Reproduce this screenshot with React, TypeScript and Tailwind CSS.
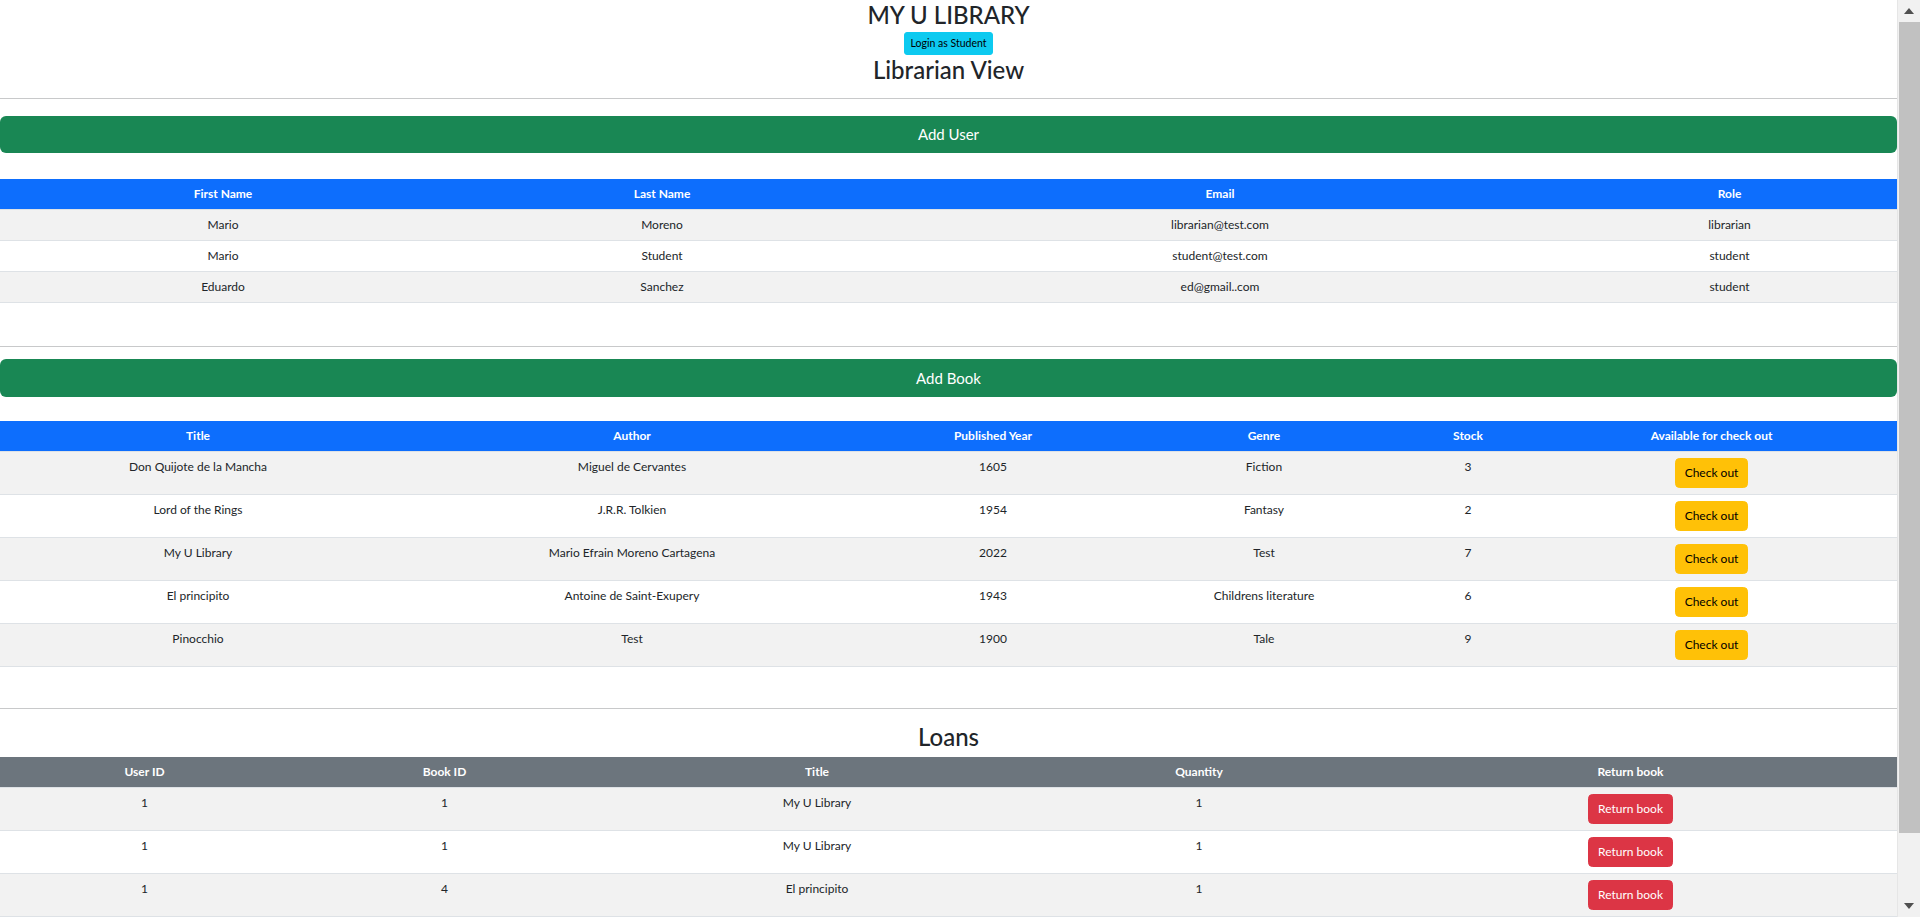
import React from "react";

type User = { firstName: string; lastName: string; email: string; role: string };
type Book = { title: string; author: string; year: string; genre: string; stock: number };
type Loan = { userId: number; bookId: number; title: string; quantity: number };

const users: User[] = [
  { firstName: "Mario", lastName: "Moreno", email: "librarian@test.com", role: "librarian" },
  { firstName: "Mario", lastName: "Student", email: "student@test.com", role: "student" },
  { firstName: "Eduardo", lastName: "Sanchez", email: "ed@gmail..com", role: "student" },
];

const books: Book[] = [
  { title: "Don Quijote de la Mancha", author: "Miguel de Cervantes", year: "1605", genre: "Fiction", stock: 3 },
  { title: "Lord of the Rings", author: "J.R.R. Tolkien", year: "1954", genre: "Fantasy", stock: 2 },
  { title: "My U Library", author: "Mario Efrain Moreno Cartagena", year: "2022", genre: "Test", stock: 7 },
  { title: "El principito", author: "Antoine de Saint-Exupery", year: "1943", genre: "Childrens literature", stock: 6 },
  { title: "Pinocchio", author: "Test", year: "1900", genre: "Tale", stock: 9 },
];

const loans: Loan[] = [
  { userId: 1, bookId: 1, title: "My U Library", quantity: 1 },
  { userId: 1, bookId: 1, title: "My U Library", quantity: 1 },
  { userId: 1, bookId: 4, title: "El principito", quantity: 1 },
];

const th = "px-[6px] py-[6px] leading-[18px] text-[12px] font-bold text-white text-center align-top border-b border-[#dee2e6]";
const td = "px-[6px] py-[6px] leading-[18px] text-[12px] text-center align-top border-b border-[#dee2e6]";
const rowBg = (i: number) => (i % 2 === 0 ? "bg-[#f2f2f2]" : "bg-white");

// window scrollbar, drawn since the headless page hides the native one
function ScrollBar() {
  return (
    <div className="w-[23px] shrink-0 flex flex-col bg-[#f1f1f1] border-l border-[#e6e6e6]">
      <div className="h-[22px] flex items-center justify-center">
        <svg width="10" height="6" viewBox="0 0 10 6">
          <path d="M5 0 L10 6 L0 6 Z" fill="#505050" />
        </svg>
      </div>
      <div className="h-[811px] ml-[1px] bg-[#c1c1c1]" />
      <div className="flex-1" />
      <div className="h-[22px] flex items-center justify-center">
        <svg width="10" height="6" viewBox="0 0 10 6">
          <path d="M0 0 L10 0 L5 6 Z" fill="#505050" />
        </svg>
      </div>
    </div>
  );
}

export default function App() {
  return (
    <div className="flex h-screen bg-white text-[#212529] font-['Segoe_UI',Lato,sans-serif]">
      <div className="flex-1 min-w-0 overflow-y-auto [scrollbar-width:none] pb-[72px]">
        {/* header */}
        <div className="flex flex-col items-center">
          <h2 className="text-[24px] leading-[29px] font-medium">MY U LIBRARY</h2>
          <button className="mt-[3px] h-[23px] px-[6px] text-[10.5px] leading-[15px] text-black bg-[#0dcaf0] border border-[#0dcaf0] rounded-[3px]">
            Login as Student
          </button>
          <h2 className="text-[24px] leading-[29px] font-medium">Librarian View</h2>
        </div>

        <hr className="mt-[14px] border-t border-[#c8c9ca]" />

        {/* users */}
        <button className="mt-[17px] w-full h-[37px] text-[15px] text-white bg-[#198754] rounded-[6px]">
          Add User
        </button>
        <table className="mt-[26px] w-full table-fixed border-collapse">
          <colgroup>
            <col className="w-[446px]" />
            <col className="w-[432px]" />
            <col className="w-[684px]" />
            <col />
          </colgroup>
          <thead>
            <tr className="bg-[#0d6efd]">
              <th className={th}>First Name</th>
              <th className={th}>Last Name</th>
              <th className={th}>Email</th>
              <th className={th}>Role</th>
            </tr>
          </thead>
          <tbody>
            {users.map((u, i) => (
              <tr key={i} className={rowBg(i)}>
                <td className={td}>{u.firstName}</td>
                <td className={td}>{u.lastName}</td>
                <td className={td}>{u.email}</td>
                <td className={td}>{u.role}</td>
              </tr>
            ))}
          </tbody>
        </table>

        <hr className="mt-[43px] border-t border-[#c8c9ca]" />

        {/* books */}
        <button className="mt-[12px] w-full h-[38px] text-[15px] text-white bg-[#198754] rounded-[6px]">
          Add Book
        </button>
        <table className="mt-[24px] w-full table-fixed border-collapse">
          <colgroup>
            <col className="w-[396px]" />
            <col className="w-[472px]" />
            <col className="w-[250px]" />
            <col className="w-[292px]" />
            <col className="w-[116px]" />
            <col />
          </colgroup>
          <thead>
            <tr className="bg-[#0d6efd]">
              <th className={th}>Title</th>
              <th className={th}>Author</th>
              <th className={th}>Published Year</th>
              <th className={th}>Genre</th>
              <th className={th}>Stock</th>
              <th className={th}>Available for check out</th>
            </tr>
          </thead>
          <tbody>
            {books.map((b, i) => (
              <tr key={i} className={rowBg(i)}>
                <td className={td}>{b.title}</td>
                <td className={td}>{b.author}</td>
                <td className={td}>{b.year}</td>
                <td className={td}>{b.genre}</td>
                <td className={td}>{b.stock}</td>
                <td className={td}>
                  <button className="h-[30px] px-[9px] text-[12px] leading-[18px] text-black bg-[#ffc107] border border-[#ffc107] rounded-[4.5px]">
                    Check out
                  </button>
                </td>
              </tr>
            ))}
          </tbody>
        </table>

        <hr className="mt-[41px] border-t border-[#c8c9ca]" />

        {/* loans */}
        <h2 className="mt-[13px] text-center text-[24px] leading-[29px] font-medium">Loans</h2>
        <table className="mt-[6px] w-full table-fixed border-collapse">
          <colgroup>
            <col className="w-[289px]" />
            <col className="w-[311px]" />
            <col className="w-[434px]" />
            <col className="w-[330px]" />
            <col />
          </colgroup>
          <thead>
            <tr className="bg-[#6c757d]">
              <th className={th}>User ID</th>
              <th className={th}>Book ID</th>
              <th className={th}>Title</th>
              <th className={th}>Quantity</th>
              <th className={th}>Return book</th>
            </tr>
          </thead>
          <tbody>
            {loans.map((l, i) => (
              <tr key={i} className={rowBg(i)}>
                <td className={td}>{l.userId}</td>
                <td className={td}>{l.bookId}</td>
                <td className={td}>{l.title}</td>
                <td className={td}>{l.quantity}</td>
                <td className={td}>
                  <button className="h-[30px] px-[9px] text-[12px] leading-[18px] text-white bg-[#dc3545] border border-[#dc3545] rounded-[4.5px]">
                    Return book
                  </button>
                </td>
              </tr>
            ))}
          </tbody>
        </table>
      </div>
      <ScrollBar />
    </div>
  );
}
